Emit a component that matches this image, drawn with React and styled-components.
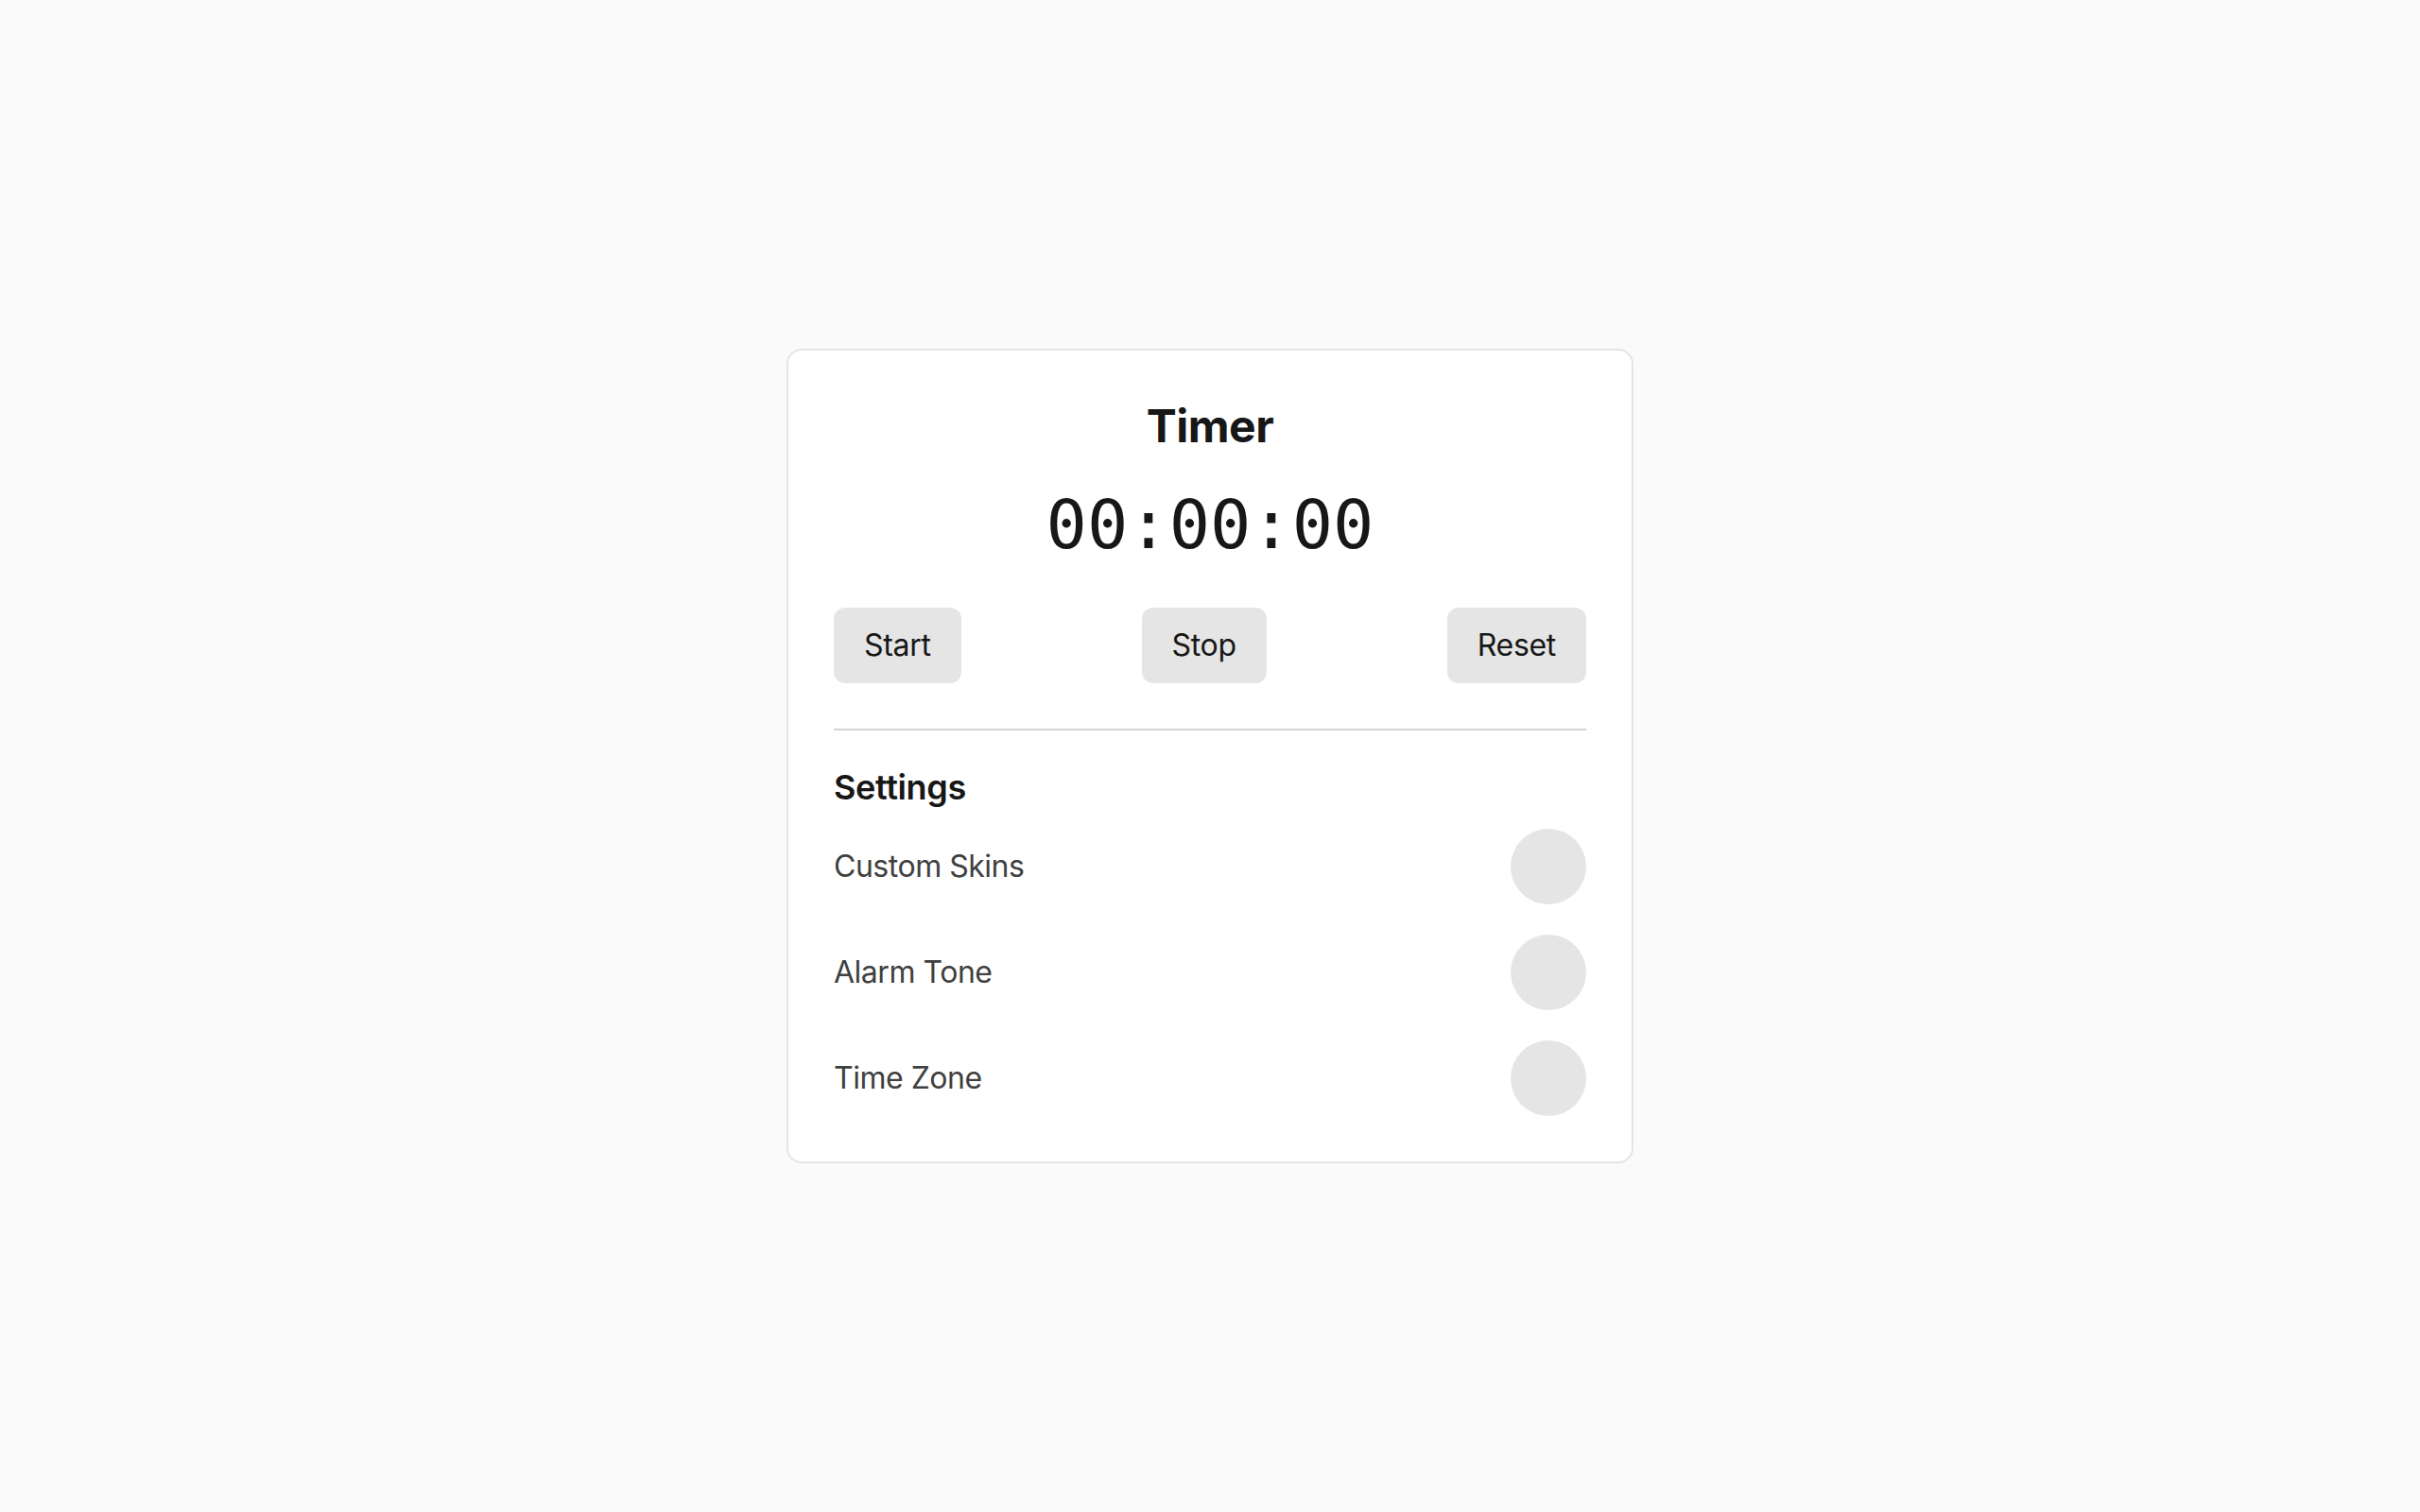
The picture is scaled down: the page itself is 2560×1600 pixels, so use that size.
import React, { useState } from "react";
import styled, { createGlobalStyle } from "styled-components";

const GlobalStyle = createGlobalStyle`
  html, body {
    margin: 0;
    padding: 0;
    background: #fafafa;
    font-family: Inter, "Noto Sans", "Liberation Sans", sans-serif;
    color: #171717;
  }
  * {
    box-sizing: border-box;
  }
`;

const Page = styled.div`
  min-height: 100vh;
  display: flex;
  align-items: center;
  justify-content: center;
`;

const Card = styled.div`
  width: 896px;
  background: #ffffff;
  border: 2px solid #e5e5e5;
  border-radius: 16px;
  padding: 48px;
  display: flex;
  flex-direction: column;
`;

const Title = styled.h1`
  margin: 0 0 32px;
  font-size: 48px;
  line-height: 64px;
  font-weight: 700;
  letter-spacing: -0.01em;
  text-align: center;
  color: #171717;
`;

const Clock = styled.div`
  margin: 0 0 48px;
  font-family: "DejaVu Sans Mono", "Liberation Mono", monospace;
  font-feature-settings: "zero" 1;
  font-variant-numeric: slashed-zero;
  font-size: 72px;
  line-height: 80px;
  text-align: center;
  color: #171717;
`;

const Controls = styled.div`
  display: flex;
  justify-content: space-between;
`;

const Button = styled.button`
  height: 80px;
  padding: 0 32px;
  border: none;
  border-radius: 12px;
  background: #e5e5e5;
  color: #171717;
  font-family: inherit;
  font-size: 32px;
  line-height: 48px;
  letter-spacing: -0.01em;
  cursor: pointer;
`;

const Divider = styled.hr`
  margin: 48px 0 32px;
  border: none;
  height: 2px;
  background: #d4d4d4;
`;

const SectionTitle = styled.h2`
  margin: 0 0 16px;
  font-size: 36px;
  line-height: 56px;
  font-weight: 600;
  letter-spacing: -0.01em;
  color: #171717;
`;

const SettingsList = styled.div`
  display: flex;
  flex-direction: column;
  gap: 32px;
`;

const SettingRow = styled.div`
  display: flex;
  align-items: center;
  justify-content: space-between;
`;

const Label = styled.span`
  font-size: 32px;
  line-height: 48px;
  letter-spacing: -0.015em;
  color: #404040;
`;

const Toggle = styled.button`
  width: 80px;
  height: 80px;
  border: none;
  border-radius: 50%;
  background: ${(p) => (p.on ? "#a3a3a3" : "#e5e5e5")};
  cursor: pointer;
  padding: 0;
`;

const settings = ["Custom Skins", "Alarm Tone", "Time Zone"];

const pad = (n) => String(n).padStart(2, "0");

const App = () => {
  let [seconds, setSeconds] = useState(0);
  let [timer, setTimer] = useState(null);
  let [enabled, setEnabled] = useState({});

  const start = () => {
    if (timer) return;
    setTimer(setInterval(() => setSeconds((s) => s + 1), 1000));
  };

  const stop = () => {
    clearInterval(timer);
    setTimer(null);
  };

  const reset = () => {
    stop();
    setSeconds(0);
  };

  const h = Math.floor(seconds / 3600);
  const m = Math.floor((seconds % 3600) / 60);
  const s = seconds % 60;

  return (
    <>
      <GlobalStyle />
      <Page>
        <Card>
          <Title>Timer</Title>
          <Clock>
            {pad(h)}:{pad(m)}:{pad(s)}
          </Clock>
          <Controls>
            <Button onClick={start}>Start</Button>
            <Button onClick={stop}>Stop</Button>
            <Button onClick={reset}>Reset</Button>
          </Controls>
          <Divider />
          <SectionTitle>Settings</SectionTitle>
          <SettingsList>
            {settings.map((name) => (
              <SettingRow key={name}>
                <Label>{name}</Label>
                <Toggle
                  aria-label={name}
                  on={enabled[name] ? 1 : 0}
                  onClick={() =>
                    setEnabled({ ...enabled, [name]: !enabled[name] })
                  }
                />
              </SettingRow>
            ))}
          </SettingsList>
        </Card>
      </Page>
    </>
  );
};

export default App;
